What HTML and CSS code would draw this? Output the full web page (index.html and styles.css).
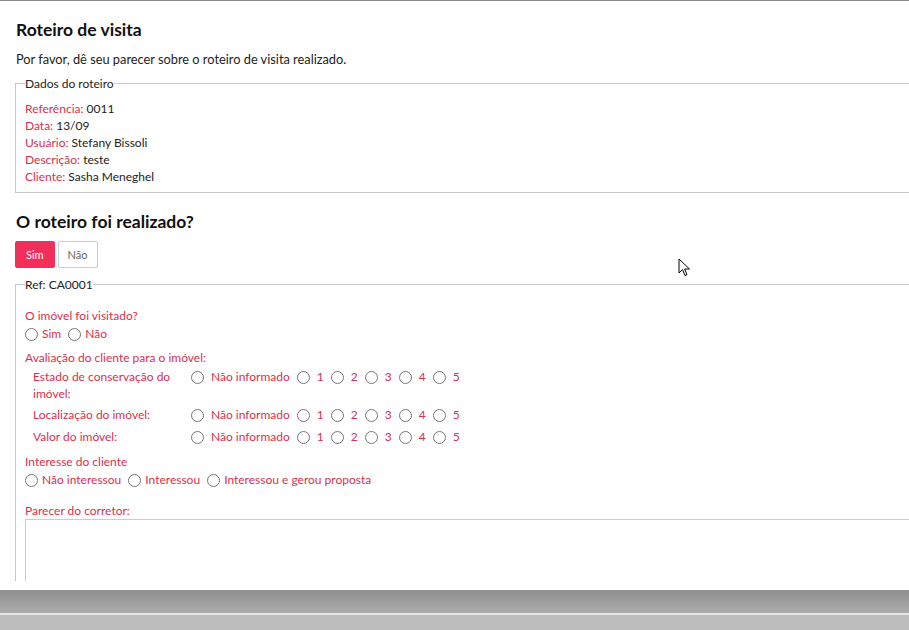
FILE: index.html
```html
<!DOCTYPE html>
<html lang="pt-BR">
<head>
    <meta charset="UTF-8">
    <title>Roteiro de visita</title>
    <link rel="stylesheet" href="styles.css">
</head>
<body>

    <div class="screen">
        <div class="page">
            <h1>Roteiro de visita</h1>
            <p class="intro">Por favor, dê seu parecer sobre o roteiro de visita realizado.</p>

            <!-- Dados do roteiro -->
            <fieldset class="box">
                <legend>Dados do roteiro</legend>
                <div class="info"><span class="lbl">Referência:</span> 0011</div>
                <div class="info"><span class="lbl">Data:</span> 13/09</div>
                <div class="info"><span class="lbl">Usuário:</span> Stefany Bissoli</div>
                <div class="info"><span class="lbl">Descrição:</span> teste</div>
                <div class="info"><span class="lbl">Cliente:</span> Sasha Meneghel</div>
            </fieldset>

            <h2>O roteiro foi realizado?</h2>
            <div class="toggle">
                <button class="btn btn-on">Sim</button>
                <button class="btn">Não</button>
            </div>

            <!-- Imóvel -->
            <fieldset class="box box-ref">
                <legend>Ref: CA0001</legend>

                <div class="question">O imóvel foi visitado?</div>
                <div class="options">
                    <label class="opt"><span class="radio"></span>Sim</label>
                    <label class="opt"><span class="radio"></span>Não</label>
                </div>

                <div class="question">Avaliação do cliente para o imóvel:</div>
                <table class="rating">
                    <tr>
                        <td class="rating-label">Estado de conservação do imóvel:</td>
                        <td class="rating-cell">
                            <div class="rating-opts">
                                <span class="r"><span class="radio"></span>Não informado</span>
                                <span class="r"><span class="radio"></span>1</span>
                                <span class="r"><span class="radio"></span>2</span>
                                <span class="r"><span class="radio"></span>3</span>
                                <span class="r"><span class="radio"></span>4</span>
                                <span class="r"><span class="radio"></span>5</span>
                            </div>
                        </td>
                    </tr>
                    <tr>
                        <td class="rating-label">Localização do imóvel:</td>
                        <td class="rating-cell">
                            <div class="rating-opts">
                                <span class="r"><span class="radio"></span>Não informado</span>
                                <span class="r"><span class="radio"></span>1</span>
                                <span class="r"><span class="radio"></span>2</span>
                                <span class="r"><span class="radio"></span>3</span>
                                <span class="r"><span class="radio"></span>4</span>
                                <span class="r"><span class="radio"></span>5</span>
                            </div>
                        </td>
                    </tr>
                    <tr>
                        <td class="rating-label">Valor do imóvel:</td>
                        <td class="rating-cell">
                            <div class="rating-opts">
                                <span class="r"><span class="radio"></span>Não informado</span>
                                <span class="r"><span class="radio"></span>1</span>
                                <span class="r"><span class="radio"></span>2</span>
                                <span class="r"><span class="radio"></span>3</span>
                                <span class="r"><span class="radio"></span>4</span>
                                <span class="r"><span class="radio"></span>5</span>
                            </div>
                        </td>
                    </tr>
                </table>

                <div class="question q-gap">Interesse do cliente</div>
                <div class="options">
                    <label class="opt"><span class="radio"></span>Não interessou</label>
                    <label class="opt"><span class="radio"></span>Interessou</label>
                    <label class="opt"><span class="radio"></span>Interessou e gerou proposta</label>
                </div>

                <div class="question q-gap2">Parecer do corretor:</div>
                <textarea class="notes"></textarea>
            </fieldset>
        </div>
    </div>

    <!-- ponteiro do mouse -->
    <svg class="cursor" width="13" height="20" viewBox="0 0 13 20">
        <path d="M1 1 L1 15 L4.5 11.5 L7 17.5 L9 16.6 L6.6 11 L11.5 11 Z" fill="#fff" stroke="#000" stroke-width="1"/>
    </svg>

    <div class="taskbar"></div>
    <div class="taskbar-line"></div>
    <div class="taskbar-bottom"></div>

</body>
</html>
```

FILE: styles.css
```css
/* Geral */
body {
    margin: 0;
    font-family: 'Lato', 'Open Sans', sans-serif;
    color: #222;
    background: #fff;
    overflow: hidden;
    width: 909px;
    height: 630px;
    position: relative;
}

.screen {
    height: 590px;
    border-top: 1px solid #8c8c8c;
    box-sizing: border-box;
}

.page {
    height: 580px;
    overflow: hidden;
    padding-left: 15px;
}

h1 {
    margin: 0 0 0 1px;
    padding-top: 18px;
    font-size: 17.5px;
    line-height: 22px;
    font-weight: bold;
    color: #111;
}

.intro {
    margin: 9px 0 0 1px;
    font-size: 12.8px;
    line-height: 18px;
}

/* Caixas */
.box {
    margin: 8px 0 0;
    width: 940px;
    padding: 9px 9px 7px;
    border: 1px solid #c8c8c8;
    box-sizing: border-box;
}

.box legend {
    padding: 0;
    font-size: 12px;
    color: #222;
}

.info {
    font-size: 12px;
    line-height: 17px;
}

.lbl {
    color: #d9304f;
}

h2 {
    margin: 18px 0 0 1px;
    font-size: 17.5px;
    line-height: 22px;
    font-weight: bold;
    color: #111;
}

/* Botões */
.toggle {
    margin-top: 8px;
    display: flex;
    gap: 3px;
}

.btn {
    font-family: inherit;
    font-size: 11px;
    height: 27px;
    padding: 0 9px;
    border: 1px solid #ccc;
    background: #fff;
    color: #666;
    border-radius: 2px;
}

.btn-on {
    background: #f0305a;
    border-color: #f0305a;
    color: #fff;
    padding: 0 10px;
}

.box-ref {
    margin-top: 9px;
    padding: 15px 9px 0;
    height: 320px;
}

.question {
    font-size: 12px;
    line-height: 17px;
    color: #d9304f;
}

.options {
    font-size: 12px;
    line-height: 18px;
    color: #d9304f;
    display: flex;
    gap: 7px;
    margin: 1px 0 6px;
}

.opt {
    display: flex;
    align-items: center;
}

.radio {
    display: inline-block;
    flex: none;
    width: 11px;
    height: 11px;
    border: 1px solid #777;
    border-radius: 50%;
    margin: 1px 4px 0 0;
}

/* Tabela de avaliação */
.rating {
    border-collapse: collapse;
    margin: 2px 0 0 8px;
    font-size: 12px;
    color: #d9304f;
}

.rating td {
    padding: 0;
    line-height: 17px;
    vertical-align: top;
}

.rating td.rating-label {
    width: 153px;
    padding: 0 5px 4px 0;
}

.rating td.rating-cell {
    padding-bottom: 5px;
}

.rating-opts {
    display: flex;
    gap: 7px;
    white-space: nowrap;
}

.r {
    display: flex;
    align-items: center;
}

.r .radio {
    margin-right: 7px;
}

.q-gap {
    margin-top: 3px;
}

.q-gap2 {
    margin-top: 13px;
}

.notes {
    display: block;
    margin-top: 0;
    width: 960px;
    height: 90px;
    border: 1px solid #ccc;
    resize: none;
}

/* Ponteiro */
.cursor {
    position: absolute;
    left: 678px;
    top: 258px;
}

/* Barra inferior */
.taskbar {
    height: 23px;
    background: linear-gradient(#8e8e8e, #acacac);
}

.taskbar-line {
    height: 2px;
    background: #e6e6e6;
}

.taskbar-bottom {
    height: 15px;
    background: #bdbdbd;
}
```
